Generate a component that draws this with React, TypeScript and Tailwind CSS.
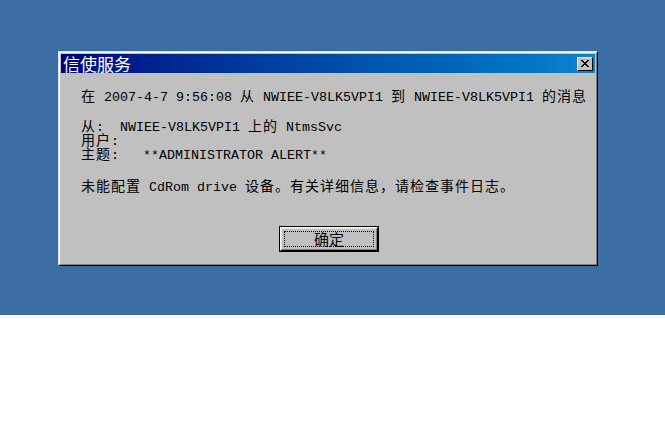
import React from 'react';

const CJK = /([\u3000-\u303f\u4e00-\u9fff\uff00-\uffef]+)/;

function Mixed({ text }: { text: string }) {
  const parts = text.split(CJK).filter((p) => p !== '');
  return (
    <>
      {parts.map((p, i) =>
        CJK.test(p) ? (
          <span key={i} className="inline-block h-[13px] align-baseline text-[14px] tracking-[1px] leading-[13px] font-['Noto_Sans_CJK_SC',sans-serif]">
            {p}
          </span>
        ) : (
          <span key={i} className="inline-block h-[13px] align-baseline text-[13.33px] leading-[13px] font-['Liberation_Mono',monospace] whitespace-pre">
            {p}
          </span>
        )
      )}
    </>
  );
}

function Line({ text, className = '' }: { text: string; className?: string }) {
  return <div className={`h-[14px] leading-[14px] whitespace-pre text-black ${className}`}><Mixed text={text} /></div>;
}

export default function App() {
  return (
    <div className="w-[665px] h-[432px] bg-white">
      <div className="h-[315px] bg-[#3a6ea5] pt-[51px] pl-[58px]">
        {/* window */}
        <div className="w-[540px] h-[215px] border border-t-[#dfdfdf] border-l-[#dfdfdf] border-r-black border-b-black">
          <div className="h-full border border-t-white border-l-white border-r-[#808080] border-b-[#808080] bg-[#c0c0c0] p-px flex flex-col">
            <div className="h-[19px] flex items-center justify-between bg-gradient-to-r from-[#000080] to-[#1084d0] pl-[2px] pr-[2px]">
              <span className="text-white text-[17px] leading-[19px] font-['Noto_Sans_CJK_SC',sans-serif]">信使服务</span>
              <div className="w-[16px] h-[14px] bg-[#c0c0c0] border border-t-white border-l-white border-r-black border-b-black flex items-center justify-center">
                <svg width="8" height="7" viewBox="0 0 8 7" shapeRendering="crispEdges">
                  <path d="M0 0h2v1h-2zM6 0h2v1h-2zM1 1h2v1h-2zM5 1h2v1h-2zM2 2h4v1h-4zM3 3h2v1h-2zM2 4h4v1h-4zM1 5h2v1h-2zM5 5h2v1h-2zM0 6h2v1h-2zM6 6h2v1h-2z" fill="#000" />
                </svg>
              </div>
            </div>
            <div className="pl-[20px] pt-[15px] flex flex-col">
              <Line text="在 2007-4-7 9:56:08 从 NWIEE-V8LK5VPI1 到 NWIEE-V8LK5VPI1 的消息" />
              <Line text="从:  NWIEE-V8LK5VPI1 上的 NtmsSvc" className="mt-[16px]" />
              <Line text="用户:" />
              <Line text="主题:   **ADMINISTRATOR ALERT**" />
              <Line text="未能配置 CdRom drive 设备。有关详细信息，请检查事件日志。" className="mt-[18px]" />
            </div>
            <div className="flex justify-center mt-[34px] pl-[2px]">
              <button className="w-[100px] h-[26px] border border-black bg-[#c0c0c0] p-0">
                <div className="h-full border border-t-white border-l-white border-r-black border-b-black">
                  <div className="h-full border border-t-[#dfdfdf] border-l-[#dfdfdf] border-r-[#808080] border-b-[#808080] p-[2px]">
                    <div className="h-full border border-dotted border-black flex items-center justify-center">
                      <span className="text-[15px] leading-[16px] text-black font-['Noto_Sans_CJK_SC',sans-serif]">确定</span>
                    </div>
                  </div>
                </div>
              </button>
            </div>
          </div>
        </div>
      </div>
    </div>
  );
}
